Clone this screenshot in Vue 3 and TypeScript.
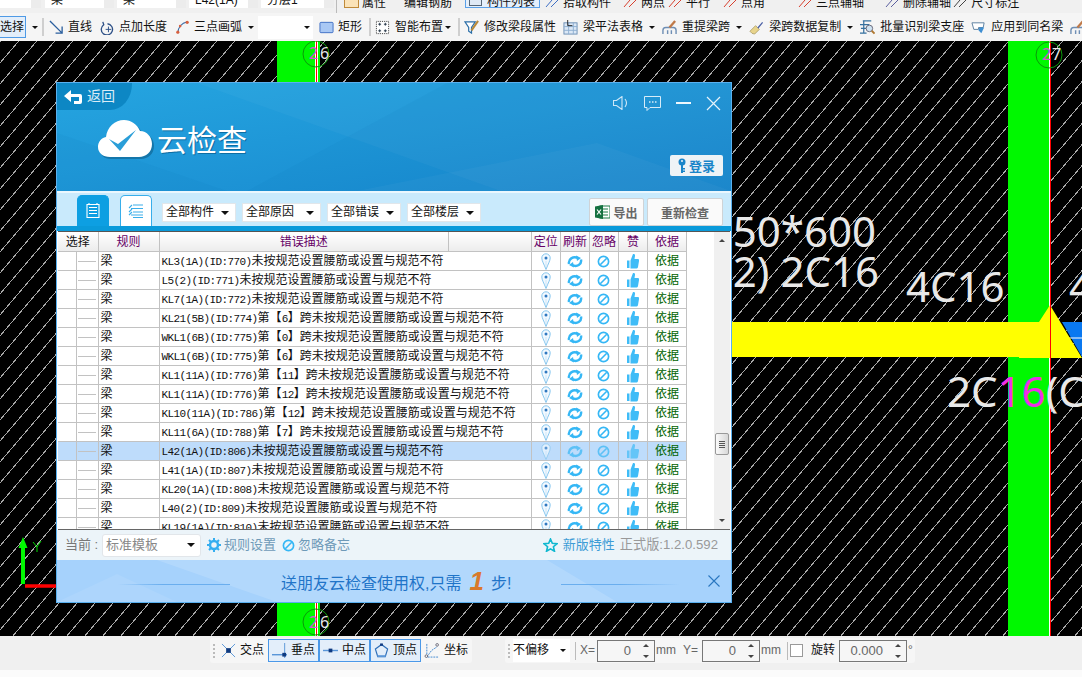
<script setup lang="ts">
// 广联达风格的梁平法界面 + 云检查弹窗,图标都是手画的 symbol
interface Tool {
  label: string
  icon?: string
  arrow?: boolean
}

const mainTools: Tool[] = [
  { label: '直线', icon: 'i-line' },
  { label: '点加长度', icon: 'i-len' },
  { label: '三点画弧', icon: 'i-arc', arrow: true },
]
const beamTools: Tool[] = [
  { label: '修改梁段属性', icon: 'i-edit' },
  { label: '梁平法表格', icon: 'i-table', arrow: true },
  { label: '重提梁跨', icon: 'i-rebeam', arrow: true },
  { label: '梁跨数据复制', icon: 'i-brush', arrow: true },
  { label: '批量识别梁支座', icon: 'i-batch' },
  { label: '应用到同名梁', icon: 'i-apply' },
]

// 顶上被裁掉一半的那排工具条,ml 是和前一项的间距,tone 是小图标的颜色
const clippedTools = [
  { label: '拾取构件', ml: 5, tone: '#3f6fc4' },
  { label: '两点', ml: 12, tone: '#d8402f' },
  { label: '平行', ml: 3, tone: '#d8402f' },
  { label: '点角', ml: 13, tone: '#d8402f' },
  { label: '三点辅轴', ml: 33, tone: '#d8402f' },
  { label: '删除辅轴', ml: 21, tone: '#5b5f9f' },
  { label: '尺寸标注', ml: 2, tone: '#444' },
]

const filters = [
  { label: '全部构件', w: 74 },
  { label: '全部原因', w: 79 },
  { label: '全部错误', w: 74 },
  { label: '全部楼层', w: 74 },
]

const plain = '未按规范设置腰筋或设置与规范不符'
const errors = [
  'KL3(1A)(ID:770)' + plain,
  'L5(2)(ID:771)' + plain,
  'KL7(1A)(ID:772)' + plain,
  'KL21(5B)(ID:774)第【6】跨' + plain,
  'WKL1(6B)(ID:775)第【0】跨' + plain,
  'WKL1(6B)(ID:775)第【6】跨' + plain,
  'KL1(11A)(ID:776)第【11】跨' + plain,
  'KL1(11A)(ID:776)第【12】跨' + plain,
  'KL10(11A)(ID:786)第【12】跨' + plain,
  'KL11(6A)(ID:788)第【7】跨' + plain,
  'L42(1A)(ID:806)' + plain,
  'L41(1A)(ID:807)' + plain,
  'KL20(1A)(ID:808)' + plain,
  'L40(2)(ID:809)' + plain,
  'KL19(1A)(ID:810)' + plain,
]
const selectedRow = 10

// 原图是宋体,半角只有 6px 宽,这里把 ASCII 单独拆出来用等宽字体
function segments(text: string) {
  return text
    .split(/([\x20-\x7e]+)/)
    .filter(Boolean)
    .map((t) => ({ t, latin: /^[\x20-\x7e]/.test(t) }))
}
</script>

<template>
  <div class="app">
    <svg class="defs" width="0" height="0" aria-hidden="true">
      <symbol id="i-line" viewBox="0 0 16 16">
        <path d="M1 1l13 13M14 7v7H7" fill="none" stroke="#2b5f9e" stroke-width="1.4" />
      </symbol>
      <symbol id="i-len" viewBox="0 0 16 16">
        <path d="M3 2l1 3a6 6 0 1 0 4-1" fill="none" stroke="#2c4f86" stroke-width="1.4" />
        <path d="M9 7v6M6 10h6" stroke="#2c4f86" />
      </symbol>
      <symbol id="i-arc" viewBox="0 0 16 16">
        <path d="M3 14C3 8 7 3 13 2" fill="none" stroke="#3d6ea8" stroke-width="1.2" />
        <circle cx="3" cy="13" r="1.7" fill="#d8603f" />
        <circle cx="5.5" cy="6.5" r="1.4" fill="#d8603f" />
        <circle cx="13" cy="2.5" r="1.7" fill="#d8603f" />
      </symbol>
      <symbol id="i-rect" viewBox="0 0 16 16">
        <rect x="1" y="2.5" width="14" height="11" rx="1" fill="#a9c8f4" stroke="#3f6fc4" />
      </symbol>
      <symbol id="i-smart" viewBox="0 0 16 16">
        <rect x="1.5" y="1.5" width="13" height="13" fill="#fff" stroke="#333" stroke-dasharray="1 1" />
        <path d="M5 3v3M3.500 4.500h3M11 3v3M9.500 4.500h3M5 10v3M3.500 11.500h3M11 10v3M9.500 11.500h3" stroke="#234" />
      </symbol>
      <symbol id="i-edit" viewBox="0 0 16 16">
        <path d="M1 2h11L8 8v6L5 12V8z" fill="#fff" stroke="#2c6fa8" stroke-width="1.3" />
        <path d="M15 1L8 11" stroke="#b98a3a" stroke-width="2.200" />
      </symbol>
      <symbol id="i-table" viewBox="0 0 16 16">
        <rect x="1" y="3" width="14" height="12" fill="#dbe8f6" stroke="#6d8fb5" />
        <path d="M1 7h14M1 11h14M6 3v12M11 3v12" stroke="#8fb0d2" />
        <path d="M5 0v6h5" fill="none" stroke="#222" />
      </symbol>
      <symbol id="i-rebeam" viewBox="0 0 16 16">
        <path d="M1 15v-4q0-3 3-3h8q3 0 3 3v4M6 15v-4M10 15v-4" fill="none" stroke="#6f8fb5" stroke-width="1.500" />
        <path d="M14 1L8 8" stroke="#c07a4a" stroke-width="2.500" />
      </symbol>
      <symbol id="i-brush" viewBox="0 0 16 16">
        <path d="M1 12l6-6 4 4-5 5q-3 0-5-3z" fill="#e8d48c" stroke="#9a8a50" stroke-width=".7" />
        <path d="M9 8l5-6 1 1-5 6z" fill="#4a5fa5" />
      </symbol>
      <symbol id="i-batch" viewBox="0 0 16 16">
        <path d="M0 5h10M1 9h7M3 1h9M4 1v13M0 14h7" stroke="#35709f" stroke-width="1.300" fill="none" />
        <circle cx="10" cy="9" r="3.500" fill="#cfe3f2" stroke="#667" />
        <path d="M12.500 11.500l3 3" stroke="#b07830" stroke-width="2" />
      </symbol>
      <symbol id="i-apply" viewBox="0 0 16 16">
        <path d="M1 3h13l-1 5H8v2H3z" fill="#fff" stroke="#5b7f9f" />
        <path d="M9 8h5l-3 6-3-3z" fill="#3f8fd2" />
      </symbol>
      <symbol id="i-cross" viewBox="0 0 16 16">
        <path d="M1 1l14 14M15 1L1 15" stroke="#5a96d8" />
        <rect x="5.500" y="5.500" width="5" height="5" fill="#0f3a80" />
      </symbol>
      <symbol id="i-perp" viewBox="0 0 16 16">
        <path d="M0 12.500h16" stroke="#5a96d8" stroke-width="1.500" />
        <path d="M13.500 0v16" stroke="#5a96d8" />
        <rect x="11" y="10.500" width="4" height="4" fill="#0f3a80" />
      </symbol>
      <symbol id="i-mid" viewBox="0 0 16 16">
        <path d="M0 8h16" stroke="#5a96d8" stroke-width="1.500" />
        <rect x="6" y="6" width="4" height="4" fill="#0f3a80" />
      </symbol>
      <symbol id="i-vert" viewBox="0 0 16 16">
        <path d="M8 1.500l6.500 5-2.500 8H4l-2.500-8z" fill="none" stroke="#2f6fb8" stroke-width="1.300" />
        <path d="M3.500 14h9" stroke="#5a96d8" stroke-width="2" />
        <rect x="6.500" y="0.500" width="3" height="2.500" fill="#0f3a80" />
      </symbol>
      <symbol id="i-coord" viewBox="0 0 16 16">
        <path d="M3 1v14h12M3 15l5-7 6-4" fill="none" stroke="#3f86d0" stroke-dasharray="2 1" />
        <circle cx="2.500" cy="14" r="1.400" fill="#fff" stroke="#334" stroke-width=".7" />
        <circle cx="14" cy="2" r="1.400" fill="#fff" stroke="#334" stroke-width=".7" />
      </symbol>
      <symbol id="i-pin" viewBox="0 0 10 17">
        <path d="M5 16.500C3 11 .8 8 .8 5a4.200 4.200 0 0 1 8.400 0C9.200 8 7 11 5 16.500z" fill="#f2f9ff" stroke="#86c6ee" />
        <path d="M5 14V8" stroke="#cde6f7" />
        <circle cx="5" cy="5" r="1.500" fill="#2f78c0" />
      </symbol>
      <symbol id="i-refresh" viewBox="0 0 16 13">
        <path d="M2 9C1 4 6 1 11 3" fill="none" stroke="#35b7f5" stroke-width="2.400" />
        <path d="M9 .5l5 2.500-4 3z" fill="#35b7f5" />
        <path d="M14 4.500c1 5-4 8-9 5.500" fill="none" stroke="#35b7f5" stroke-width="2.400" />
        <path d="M7 12.500L2 10l4-3z" fill="#35b7f5" />
      </symbol>
      <symbol id="i-block" viewBox="0 0 14 14">
        <circle cx="7" cy="7" r="5.500" fill="none" stroke="#35b7f5" stroke-width="1.800" />
        <path d="M3.500 10.500l7-7" stroke="#35b7f5" stroke-width="1.800" />
      </symbol>
      <symbol id="i-thumb" viewBox="0 0 12 16">
        <path d="M0 7.500h2.500V15H0zM3.500 7.500L6 1c1.500-.5 2.300.7 2 2L7.500 6H11c1 0 1.200 1 1 2l-1 6c-.2 1-1 1.500-2 1.500H3.500z" fill="#3fbcf7" />
      </symbol>
    </svg>

    <div class="strip-top">
      <div class="combo c1"><span class="arrow-box" /></div>
      <div class="combo c2">梁<span class="arrow-box" /></div>
      <div class="combo c2">梁<span class="arrow-box" /></div>
      <div class="combo c2">L42(1A)<span class="arrow-box" /></div>
      <div class="combo c3">分层1<span class="arrow-box" /></div>
      <i class="sep-top" />
      <i class="clip-ico first" />
      <span class="clip-text">属性</span>
      <span class="clip-text mid">编辑钢筋</span>
      <span class="clip-active"><i class="clip-ico inner" />构件列表</span>
      <span
        v-for="t in clippedTools"
        :key="t.label"
        class="clip-item"
        :style="{ marginLeft: t.ml + 'px' }"
      >
        <svg width="14" height="8" viewBox="0 0 14 8" fill="none" :stroke="t.tone">
          <path d="M1 7L7 0M6 7L13 0" />
        </svg>
        <span class="clip-text">{{ t.label }}</span>
      </span>
    </div>

    <div class="toolbar">
      <div class="pick">选择</div>
      <i class="caret" />
      <i class="sep first" />
      <div v-for="t in mainTools" :key="t.label" class="tool">
        <svg class="ico"><use :href="'#' + t.icon" /></svg>
        <span>{{ t.label }}</span>
        <i v-if="t.arrow" class="caret" />
      </div>
      <div class="blank-combo"><i class="caret" /></div>
      <div class="tool">
        <svg class="ico"><use href="#i-rect" /></svg>
        <span>矩形</span>
      </div>
      <i class="sep" />
      <div class="tool wide">
        <svg class="ico"><use href="#i-smart" /></svg>
        <span>智能布置</span>
        <i class="caret tight" />
      </div>
      <i class="sep" />
      <div v-for="t in beamTools" :key="t.label" class="tool wide beam">
        <svg class="ico"><use :href="'#' + t.icon" /></svg>
        <span>{{ t.label }}</span>
        <i v-if="t.arrow" class="caret" />
      </div>
      <svg class="ico"><use href="#i-rebeam" /></svg>
    </div>

    <main class="canvas">
      <svg class="drawing" width="1082" height="595" viewBox="0 41 1082 595">
        <defs>
          <pattern id="hatch" width="18" height="21" patternUnits="userSpaceOnUse">
            <path d="M-1 22.170L19-1.170" stroke="#a8a8a8" stroke-width="1" shape-rendering="crispEdges" />
          </pattern>
        </defs>
        <rect x="0" y="41" width="1082" height="595" fill="#000" />
        <rect x="0" y="41" width="1082" height="595" fill="url(#hatch)" />

        <rect x="277" y="41" width="43" height="595" fill="#00f800" />
        <rect x="1008" y="41" width="42" height="595" fill="#00f800" />
        <rect x="315" y="41" width="3" height="595" fill="#fff" />
        <rect x="316" y="41" width="1" height="595" fill="#f00" />
        <rect x="1049" y="41" width="1" height="595" fill="#fff" />
        <rect x="1050" y="41" width="1" height="595" fill="#f00" />

        <g class="axis-mark">
          <circle cx="316" cy="54" r="13" />
          <circle cx="316" cy="622" r="13" />
          <circle cx="1049" cy="55" r="13" />
        </g>
        <g class="axis-no">
          <text x="309" y="59" class="pink">2</text>
          <text x="320" y="59">6</text>
          <text x="309" y="628" class="pink">2</text>
          <text x="320" y="628">6</text>
          <text x="1042" y="60" class="pink">2</text>
          <text x="1052" y="60">7</text>
        </g>

        <path d="M1062 322H1082V357z" fill="#0a78f0" />
        <path d="M1068 338H1082" stroke="#fff" />
        <path d="M700 322H1039L1050 305L1082 358H1019V357H700z" fill="#ff0" />
        <rect x="1050" y="305" width="1" height="331" fill="#f00" />

        <g class="cad-text">
          <text x="876" y="247" text-anchor="end">250*600</text>
          <text x="879" y="287" text-anchor="end">(2) 2C16</text>
          <text x="906" y="302">4C16</text>
          <text x="1069" y="302">4C16</text>
          <text x="947" y="407">2C<tspan fill="#ee2fe8">16</tspan>(C</text>
        </g>

        <path d="M23 584V546" stroke="#00f800" stroke-width="4" />
        <path d="M23 537L27.500 548H18.500z" fill="#00f800" />
        <path d="M25 586H56" stroke="#f00" stroke-width="3.500" />
        <path d="M33 542L37 547L41 541M37 547V552" stroke="#00d800" fill="none" />
      </svg>

      <section class="dialog">
        <header class="dlg-head">
          <svg class="facets" viewBox="0 0 674 108" preserveAspectRatio="none" aria-hidden="true">
            <path d="M140 0L674 190V0z" fill="#fff" opacity=".03" />
            <path d="M390 0L190 108H674V0z" fill="#0d6fb5" opacity=".08" />
            <path d="M0 50L170 108H0z" fill="#0d6fb5" opacity=".08" />
            <path d="M300 108L540 60L674 108z" fill="#fff" opacity=".03" />
          </svg>
          <div class="head-top">
            <div class="back">
              <svg width="18" height="14" viewBox="0 0 18 14">
                <path d="M0 6L7 0v4h9q2 0 2 2v6q0 2-2 2H10v-3h5V7H7v5z" fill="#fff" />
              </svg>
              <span>返回</span>
            </div>
            <div class="win-btns">
              <svg width="17" height="14" viewBox="0 0 17 14" fill="none" stroke="#cfe8f7">
                <path d="M.500 4.500h3L9 .5v13l-5.500-4h-3zM12 3q3 4 0 8" stroke-width="1.100" />
              </svg>
              <svg width="17" height="15" viewBox="0 0 17 15" fill="none" stroke="#d7ecf8">
                <path d="M.500 .500h16v11H6l-3 3v-3H.500z" />
                <path d="M5 6h1.500M8 6h1.500M11 6h1.500" stroke-width="1.500" />
              </svg>
              <i class="min-btn" />
              <svg width="15" height="15" viewBox="0 0 15 15" stroke="#e6f3fb" stroke-width="1.200">
                <path d="M1 1l13 13M14 1L1 14" />
              </svg>
            </div>
          </div>
          <div class="head-main">
            <div class="brand">
              <svg width="56" height="40" viewBox="0 0 56 40">
                <path d="M12 39C5 39 1 35 1 29c0-5 3-9 8-10 1-10 9-17 18-17 7 0 13 4 16 11 7 0 12 6 12 13 0 8-6 13-13 13z" fill="#1476aa" transform="translate(1 1)" />
                <path d="M12 38C5 38 0 34 0 28c0-5 3-9 8-10C9 8 17 1 26 1c7 0 13 4 16 11 7 0 12 6 12 13 0 8-6 13-13 13z" fill="#fff" />
                <path d="M11 20l9 5L38 11 22 32z" fill="#2a9ed8" />
              </svg>
              <h1>云检查</h1>
            </div>
            <button type="button" class="login">
              <svg width="8" height="15" viewBox="0 0 8 15">
                <circle cx="4" cy="4" r="3.500" fill="#1a85c9" />
                <circle cx="4" cy="3" r="1" fill="#eef3f6" />
                <path d="M3 7h2v8H3zM5 10h2v1.500H5zM5 12.500h2V14H5z" fill="#1a85c9" />
              </svg>
              登录
            </button>
          </div>
        </header>

        <div class="filter-bar">
          <div class="tab active">
            <svg width="14" height="16" viewBox="0 0 14 16" fill="none" stroke="#fff" stroke-width="1.100">
              <path d="M1 1.500h12v13H1zM3 1v-1M11 1v-1M3 4.500h8M3 7.500h8M3 10.500h8" />
            </svg>
          </div>
          <div class="tab">
            <svg width="16" height="14" viewBox="0 0 16 14" fill="none" stroke="#3aaeea" stroke-width="1.100">
              <path d="M5 1h10M1 4l3-3M3 4.500h12M5 8h10M1 8l3-3M3 11h12M1 11l3-3M5 13.500h10" />
            </svg>
          </div>
          <div class="filters">
            <div
              v-for="f in filters"
              :key="f.label"
              class="filter"
              :style="{ width: f.w + 'px' }"
            >
              {{ f.label }}<i class="caret big" />
            </div>
          </div>
          <button type="button" class="ghost export">
            <svg width="15" height="14" viewBox="0 0 15 14">
              <rect x="5" y="1" width="10" height="12" fill="#fff" stroke="#1a7a45" />
              <path d="M8 4h5M8 7h5M8 10h5" stroke="#1a7a45" />
              <path d="M0 1.500L8 0v14L0 12.500z" fill="#14703f" />
              <path d="M2 4.500L6 9.500M6 4.500L2 9.500" stroke="#fff" stroke-width="1.200" />
            </svg>
            导出
          </button>
          <button type="button" class="ghost recheck">重新检查</button>
        </div>

        <div class="grid-wrap">
          <div class="grid-scroll">
            <table class="grid">
              <colgroup>
                <col class="c-tree" /><col class="c-pick" /><col class="c-rule" />
                <col class="c-desc" /><col class="c-desc2" />
                <col class="c-act" /><col class="c-act" /><col class="c-act" /><col class="c-act" />
                <col class="c-basis" />
              </colgroup>
              <thead>
                <tr>
                  <th colspan="2" class="plain">选择</th>
                  <th>规则</th>
                  <th>错误描述</th>
                  <th />
                  <th>定位</th>
                  <th>刷新</th>
                  <th>忽略</th>
                  <th>赞</th>
                  <th>依据</th>
                </tr>
              </thead>
              <tbody>
                <tr
                  v-for="(text, i) in errors"
                  :key="i"
                  :class="{ selected: i === selectedRow }"
                >
                  <td />
                  <td><i class="dash" /></td>
                  <td class="txt">梁</td>
                  <td colspan="2" class="txt">
                    <template v-for="(s, j) in segments(text)" :key="j">
                      <span v-if="s.latin" class="latin">{{ s.t }}</span>
                      <template v-else>{{ s.t }}</template>
                    </template>
                  </td>
                  <td class="act"><svg width="10" height="17"><use href="#i-pin" /></svg></td>
                  <td class="act"><svg width="16" height="13"><use href="#i-refresh" /></svg></td>
                  <td class="act"><svg width="13" height="13"><use href="#i-block" /></svg></td>
                  <td class="act"><svg width="12" height="16"><use href="#i-thumb" /></svg></td>
                  <td class="basis">依据</td>
                </tr>
              </tbody>
            </table>
          </div>
          <div class="scrollbar">
            <i class="tri up" />
            <div class="track"><div class="thumb"><i /><i /><i /><i /></div></div>
            <i class="tri down" />
          </div>
        </div>

        <div class="status">
          <span class="muted">当前 :</span>
          <div class="tpl">标准模板<i class="caret big" /></div>
          <span class="link-row">
            <svg width="14" height="14" viewBox="0 0 14 14">
              <circle cx="7" cy="7" r="4" fill="none" stroke="#35aef0" stroke-width="2.500" />
              <path d="M7 0v3M7 11v3M0 7h3M11 7h3M2 2l2 2M10 10l2 2M12 2l-2 2M4 10l-2 2" stroke="#35aef0" stroke-width="2" />
            </svg>
            规则设置
          </span>
          <span class="link-row">
            <svg width="13" height="13"><use href="#i-block" /></svg>
            忽略备忘
          </span>
          <span class="news">
            <svg width="15" height="14" viewBox="0 0 15 14">
              <path d="M7.500 1l1.800 4.300 4.700.4-3.600 3 1.100 4.600-4-2.400-4 2.400 1.100-4.600-3.600-3 4.700-.4z" fill="none" stroke="#10b8d0" stroke-width="1.600" />
            </svg>
            新版特性
          </span>
          <span class="version">正式版:1.2.0.592</span>
        </div>

        <div class="ad">
          <svg class="facets" viewBox="0 0 674 42" preserveAspectRatio="none" aria-hidden="true">
            <path d="M100 0H490L560 42H220z" fill="#fff" opacity=".14" />
            <path d="M0 42L60 14L120 42z" fill="#fff" opacity=".08" />
          </svg>
          <i class="ad-line" />
          <span class="ad-text">送朋友云检查使用权,只需<b>1</b>步!</span>
          <i class="ad-line rev" />
          <svg class="ad-close" width="12" height="12" viewBox="0 0 12 12" stroke="#2a77c0" stroke-width="1.100">
            <path d="M.5 .5l11 11M11.500 .5l-11 11" />
          </svg>
        </div>
      </section>
    </main>

    <footer class="foot">
      <div class="foot-group snap">
        <i class="grip" />
        <div class="snap-item plain-item">
          <svg class="ico"><use href="#i-cross" /></svg><span>交点</span>
        </div>
        <div class="snap-item on">
          <svg class="ico"><use href="#i-perp" /></svg><span>垂点</span>
        </div>
        <div class="snap-item on">
          <svg class="ico"><use href="#i-mid" /></svg><span>中点</span>
        </div>
        <div class="snap-item on">
          <svg class="ico"><use href="#i-vert" /></svg><span>顶点</span>
        </div>
        <div class="snap-item plain-item last">
          <svg class="ico"><use href="#i-coord" /></svg><span>坐标</span>
        </div>
      </div>
      <div class="foot-group offset">
        <i class="grip" />
        <div class="offset-combo">不偏移<i class="caret" /></div>
        <i class="foot-sep" />
        <span class="unit">X=</span>
        <div class="spin w58">0<span class="spin-btn"><i class="tri up" /><i class="tri down" /></span></div>
        <span class="unit">mm</span>
        <span class="unit y">Y=</span>
        <div class="spin w58">0<span class="spin-btn"><i class="tri up" /><i class="tri down" /></span></div>
        <span class="unit">mm</span>
        <i class="foot-sep" />
        <i class="check" />
        <span class="rotate">旋转</span>
        <div class="spin w68">0.000<span class="spin-btn"><i class="tri up" /><i class="tri down" /></span></div>
        <span class="unit">°</span>
      </div>
    </footer>
    <div class="foot-tail" />
  </div>
</template>

<style>
html,
body {
  margin: 0;
  overflow: hidden;
}
</style>

<style scoped>
.app {
  width: 1082px;
  height: 677px;
  display: flex;
  flex-direction: column;
  overflow: hidden;
  background: #f0f0f0;
  font: 12px/1.2 "Liberation Sans", "Noto Sans CJK SC", sans-serif;
  color: #111;
}
.defs {
  position: absolute;
}
.ico {
  width: 15px;
  height: 15px;
  flex: none;
}
i {
  display: block;
  font-style: normal;
}

/* 顶部被截断的工具条 */
.strip-top {
  height: 13px;
  flex: none;
  display: flex;
  align-items: flex-start;
  overflow: hidden;
  white-space: nowrap;
}
.combo {
  height: 8px;
  background: #fff;
  margin-right: 3px;
  position: relative;
  line-height: 0;
  padding-left: 6px;
  flex: none;
  box-sizing: border-box;
}
.combo.c1 { width: 41px; margin-right: 4px; }
.combo.c2 { width: 69px; }
.combo.c3 { width: 73px; margin-right: 2px; }
.arrow-box {
  position: absolute;
  right: 0;
  top: 0;
  width: 10px;
  height: 8px;
  background: #ececec;
}
.sep-top {
  width: 1px;
  height: 13px;
  background: #bbb;
  flex: none;
}
.clip-text {
  line-height: 6px;
  flex: none;
}
.clip-text.mid { margin-left: 18px; }
.clip-ico {
  width: 15px;
  height: 8px;
  background: #fbe3b8;
  border: 1px solid #c08a3a;
  border-top: 0;
  box-sizing: border-box;
  flex: none;
}
.clip-ico.first { margin: 0 3px 0 7px; }
.clip-ico.inner {
  width: 13px;
  height: 6px;
  background: #dfe9f5;
  border-color: #567;
  margin-right: 5px;
}
.clip-active {
  margin-left: 13px;
  width: 75px;
  height: 8px;
  box-sizing: border-box;
  border: 1px solid #5aa0e8;
  border-top: 0;
  background: #e4effb;
  padding: 0 6px 0 3px;
  line-height: 4px;
  display: flex;
  flex: none;
}
.clip-item {
  display: flex;
  align-items: flex-start;
  gap: 4px;
  flex: none;
}

/* 第二排工具条 */
.toolbar {
  height: 28px;
  flex: none;
  display: flex;
  align-items: center;
  background: #f5f5f5;
  white-space: nowrap;
  overflow: hidden;
}
.pick {
  width: 26px;
  height: 22px;
  box-sizing: border-box;
  border: 1px solid #4e9ae6;
  border-left: 0;
  background: #e3eefa;
  line-height: 20px;
  text-align: right;
  padding-right: 1px;
  flex: none;
}
.caret {
  width: 0;
  height: 0;
  border: 3px solid transparent;
  border-top: 3px solid #111;
  border-bottom: 0;
  margin-left: 6px;
  flex: none;
}
.caret.big {
  border-width: 4px 4px 0;
  margin-left: auto;
}
.sep {
  width: 2px;
  height: 18px;
  background: #cfcfcf;
  margin: 0 4px 0 -1px;
  flex: none;
}
.sep.first {
  margin: 0 5px 0 4px;
}
.tool {
  display: flex;
  align-items: center;
  gap: 4px;
  margin-right: 8px;
  flex: none;
}
.tool.wide {
  gap: 5px;
}
.tool.beam {
  margin-right: 7px;
}
.tool .caret {
  margin-left: 2px;
}
.tool .caret.tight {
  margin-left: -3px;
}
.tool.beam .caret {
  margin-left: 1px;
}
.blank-combo {
  width: 55px;
  height: 23px;
  background: #fff;
  display: flex;
  align-items: center;
  justify-content: flex-end;
  padding-right: 3px;
  box-sizing: border-box;
  margin: 0 6px 0 -4px;
  flex: none;
}

/* 绘图区 */
.canvas {
  position: relative;
  height: 595px;
  flex: none;
  background: #000;
  overflow: hidden;
}
.drawing {
  position: absolute;
  left: 0;
  top: 0;
}
.axis-mark circle {
  fill: none;
  stroke: #0a9a0a;
  stroke-width: 1;
}
.axis-no text {
  font: 16px "Noto Sans", sans-serif;
  fill: #e8e8e8;
}
.axis-no text.pink {
  fill: #d84fd8;
}
.cad-text text {
  font: 42px "Noto Sans", sans-serif;
  fill: #e8e8e8;
}

/* 弹窗 */
.dialog {
  position: absolute;
  left: 56px;
  top: 41px;
  width: 676px;
  height: 521px;
  box-sizing: border-box;
  border: 1px solid #58b0f0;
  display: flex;
  flex-direction: column;
  background: #fff;
}
.dlg-head {
  height: 108px;
  flex: none;
  position: relative;
  display: flex;
  flex-direction: column;
  background: linear-gradient(170deg, #25a5e0, #1786cd);
  color: #fff;
}
.facets {
  position: absolute;
  inset: 0;
  width: 100%;
  height: 100%;
  pointer-events: none;
}
.head-top {
  position: relative;
  height: 27px;
  display: flex;
  justify-content: space-between;
  flex: none;
}
.back {
  width: 75px;
  height: 27px;
  background: #0d87c4;
  border-bottom-right-radius: 22px 26px;
  display: flex;
  align-items: center;
  gap: 5px;
  padding-left: 7px;
  box-sizing: border-box;
  font-size: 14px;
  color: #dbedf7;
}
.win-btns {
  display: flex;
  align-items: center;
  gap: 14px;
  padding: 13px 10px 0 0;
  height: 14px;
}
.min-btn {
  width: 15px;
  height: 2px;
  background: #eef7fd;
  margin: 0 1px;
}
.head-main {
  position: relative;
  flex: 1;
  display: flex;
  justify-content: space-between;
  align-items: flex-end;
  padding: 9px 8px 15px 41px;
}
.brand {
  align-self: flex-start;
  display: flex;
  align-items: center;
  gap: 3px;
}
.brand h1 {
  margin: 3px 0 0;
  font-size: 30px;
  font-weight: 400;
  text-shadow: 1px 1px 0 #0e6ea3;
}
.login {
  width: 53px;
  height: 21px;
  border: 0;
  border-radius: 2px;
  background: #eef3f6;
  color: #1a85c9;
  font: bold 13px "Liberation Sans", "Noto Sans CJK SC", sans-serif;
  display: flex;
  align-items: center;
  justify-content: center;
  gap: 3px;
  padding: 0;
}

.filter-bar {
  height: 40px;
  flex: none;
  box-sizing: border-box;
  background: #c9eafc;
  border-top: 2px solid #eaf7fe;
  border-bottom: 5px solid #0a9ada;
  display: flex;
  align-items: flex-end;
  padding-left: 20px;
}
.tab {
  width: 32px;
  height: 31px;
  box-sizing: border-box;
  border: 1px solid #38aeea;
  border-bottom: 0;
  border-radius: 5px 5px 0 0;
  background: #fff;
  display: flex;
  align-items: center;
  justify-content: center;
  margin-right: 11px;
}
.tab.active {
  background: #0d9fe2;
  border-color: #0d9fe2;
}
.filters {
  display: flex;
  gap: 6px;
  align-self: flex-start;
  padding-top: 10px;
  margin-left: -1px;
}
.filter {
  height: 19px;
  box-sizing: border-box;
  background: #fff;
  border: 1px solid #e1e6ea;
  display: flex;
  align-items: center;
  padding: 0 6px 0 3px;
}
.ghost {
  height: 28px;
  align-self: flex-start;
  margin-top: 5px;
  box-sizing: border-box;
  border: 1px solid #cfd3d6;
  border-radius: 2px;
  background: #fafafa;
  color: #666;
  font: bold 12px "Liberation Sans", "Noto Sans CJK SC", sans-serif;
  padding: 0;
  display: flex;
  align-items: center;
  justify-content: center;
  gap: 3px;
}
.export {
  width: 55px;
  margin-left: 108px;
}
.recheck {
  width: 76px;
  margin-left: 3px;
}

.grid-wrap {
  height: 299px;
  flex: none;
  display: flex;
  background: #fff;
  border-top: 1px solid #555;
  border-bottom: 1px solid #666;
  box-sizing: border-box;
  margin: 0 1px;
}
.grid-scroll {
  width: 656px;
  flex: none;
  overflow: hidden;
}
.grid {
  table-layout: fixed;
  border-collapse: collapse;
  width: 629px;
}
.c-tree { width: 18px; }
.c-pick { width: 22px; }
.c-rule { width: 61px; }
.c-desc { width: 289px; }
.c-desc2 { width: 83px; }
.c-act { width: 29px; }
.c-basis { width: 39px; }
.grid th,
.grid td {
  border: 1px solid #c2c2c2;
  padding: 0;
  height: 18px;
  line-height: 18px;
  white-space: nowrap;
  overflow: hidden;
  font-weight: 400;
}
.grid th {
  background: linear-gradient(#fff, #ececec);
  color: #660066;
  border-top: 0;
  height: 19px;
  text-align: center;
}
.grid th.plain {
  color: #111;
}
.grid tr > :first-child {
  border-left: 0;
}
.grid .txt {
  padding-left: 2px;
}
.latin {
  font: 11px "Liberation Mono", monospace;
  letter-spacing: -0.6px;
}
.dash {
  height: 1px;
  background: #c2c2c2;
  margin: 0 2px 0 1px;
}
.act {
  text-align: center;
  font-size: 0;
}
.act svg {
  vertical-align: middle;
}
.basis {
  text-align: center;
  color: #006400;
}
.selected td {
  background: #bedcfb;
}
.selected .act svg {
  opacity: 0.7;
}
.scrollbar {
  width: 16px;
  flex: none;
  background: #f0f0f0;
  display: flex;
  flex-direction: column;
  align-items: center;
  padding: 7px 0;
  box-sizing: border-box;
}
.track {
  flex: 1;
  width: 100%;
  padding-top: 191px;
  box-sizing: border-box;
}
.thumb {
  height: 22px;
  margin: 0 1px;
  box-sizing: border-box;
  border: 1px solid #999;
  border-radius: 2px;
  background: linear-gradient(90deg, #fafafa, #d8d8d8);
  display: flex;
  flex-direction: column;
  justify-content: center;
  gap: 1px;
  padding: 0 3px;
}
.thumb i {
  height: 1px;
  background: #555;
}
.tri {
  width: 0;
  height: 0;
  border: 3px solid transparent;
  border-top: 0;
  border-bottom: 3px solid #444;
}
.tri.down {
  border-bottom: 0;
  border-top: 3px solid #444;
}

.status {
  height: 30px;
  flex: none;
  background: #ecf4f9;
  display: flex;
  align-items: center;
  padding-left: 8px;
  font-size: 13px;
  color: #6f9ab8;
  white-space: nowrap;
}
.muted {
  color: #777;
  width: 37px;
  flex: none;
}
.tpl {
  width: 99px;
  height: 23px;
  box-sizing: border-box;
  background: #fff;
  border: 1px solid #e2e6ea;
  border-radius: 3px;
  color: #888;
  display: flex;
  align-items: center;
  padding: 0 5px 0 3px;
  margin-right: 6px;
  flex: none;
}
.link-row {
  display: flex;
  align-items: center;
  gap: 3px;
  margin-right: 6px;
}
.news {
  display: flex;
  align-items: center;
  gap: 5px;
  margin-left: auto;
  color: #3d9cd6;
}
.version {
  margin: 0 13px 0 5px;
  font-size: 13.2px;
  color: #999;
}

.ad {
  flex: 1;
  position: relative;
  background: #a6d2fc;
  display: flex;
  align-items: center;
  overflow: hidden;
}
.ad-line {
  width: 112px;
  height: 1px;
  margin-left: 61px;
  margin-top: 6px;
  background: linear-gradient(90deg, transparent, #6aaeee 40%, #6aaeee);
  position: relative;
  flex: none;
}
.ad-line.rev {
  width: 119px;
  margin-left: 49px;
  background: linear-gradient(90deg, #6aaeee, #6aaeee 50%, transparent);
}
.ad-text {
  position: relative;
  margin-left: 51px;
  padding-top: 5px;
  width: 231px;
  flex: none;
  font-size: 16px;
  color: #1f74c8;
  display: flex;
  align-items: center;
  white-space: nowrap;
}
.ad-text b {
  font: italic bold 26px "Liberation Sans", sans-serif;
  color: #d9792a;
  margin: -4px 7px 0 8px;
}
.ad-close {
  position: absolute;
  right: 11px;
  top: 15px;
}

/* 底部捕捉工具条 */
.foot {
  height: 34px;
  flex: none;
  background: #f0f0f0;
  display: flex;
  align-items: flex-start;
  padding: 2px 0 0 210px;
  box-sizing: border-box;
  white-space: nowrap;
}
.foot-group {
  height: 25px;
  background: #f6f6f6;
  border-radius: 3px;
  display: flex;
  align-items: center;
  box-sizing: border-box;
}
.snap {
  width: 262px;
  padding-left: 3px;
}
.offset {
  width: 410px;
  margin-left: 33px;
  padding-left: 3px;
  color: #666;
}
.grip {
  width: 2px;
  height: 14px;
  margin-right: 6px;
  background: repeating-linear-gradient(#bbb 0 2px, transparent 2px 4px);
  flex: none;
}
.snap-item {
  width: 51px;
  height: 23px;
  box-sizing: border-box;
  display: flex;
  align-items: center;
  justify-content: center;
  gap: 4px;
  color: #111;
  flex: none;
}
.snap-item.plain-item {
  width: 47px;
  justify-content: flex-start;
}
.snap-item.last {
  margin-left: 3px;
  gap: 5px;
}
.snap-item.on {
  border: 1px solid #4a98e8;
  background: #e3eefa;
}
.offset-combo {
  width: 57px;
  height: 23px;
  margin-left: -3px;
  background: #fff;
  color: #111;
  display: flex;
  align-items: center;
  flex: none;
  box-sizing: border-box;
}
.offset-combo .caret {
  margin-left: 11px;
}
.foot-sep {
  width: 1px;
  height: 18px;
  background: #bbb;
  margin: 0 3px 0 5px;
  flex: none;
}
.unit {
  color: #666;
  padding: 0 1px;
  flex: none;
}
.unit.y {
  margin-left: 5px;
  margin-right: 2px;
}
.spin {
  height: 22px;
  box-sizing: border-box;
  border: 1px solid #777;
  background: #f6f6f6;
  color: #666;
  display: flex;
  align-items: center;
  justify-content: flex-end;
  font-size: 13px;
  flex: none;
  margin-left: 1px;
}
.w58 { width: 58px; }
.w68 { width: 68px; }
.spin-btn {
  width: 16px;
  height: 100%;
  margin-left: 7px;
  display: flex;
  flex-direction: column;
  align-items: center;
  justify-content: center;
  gap: 8px;
}
.check {
  width: 11px;
  height: 11px;
  border: 1px solid #999;
  background: #fff;
  flex: none;
  margin-left: -1px;
}
.rotate {
  color: #111;
  margin: 0 3px 0 8px;
  flex: none;
}
.foot-tail {
  flex: 1;
  background: #fbfbfb;
}
</style>
